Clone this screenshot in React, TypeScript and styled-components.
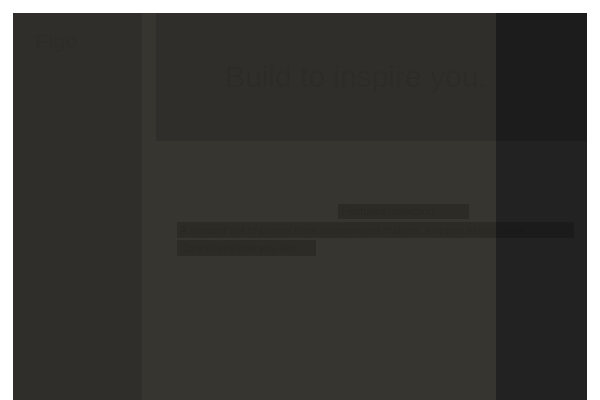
import styled, { createGlobalStyle } from 'styled-components';

const GlobalStyle = createGlobalStyle`
    html, body {
        margin: 0;
        background: #ffffff;
    }

    body {
        padding: 13px 13px 0;
        font-family: "Liberation Sans", Arial, sans-serif;
        overflow: hidden;
    }
`;

const App = () => {
    return (
        <>
            <GlobalStyle />
            <Frame>
                <Sidebar as="aside">
                    <Logo>Figo</Logo>
                </Sidebar>

                <Main as="main">
                    <Hero>
                        <HeroTitle>Build to inspire you.</HeroTitle>
                    </Hero>
                    <Body>
                        <Line $width={131} $offset={161} $height={15}>
                            Featured collection
                        </Line>
                        <Line $width={397} $height={16} $gap={3}>
                            A curated set of pieces from independent makers, shipped to your door.
                        </Line>
                        <Line $width={139} $height={16} $gap={2}>
                            Cancel anytime you like.
                        </Line>
                    </Body>
                </Main>

                <Aside>
                    <AsideTop />
                </Aside>
            </Frame>
        </>
    );
};

export default App;

const Frame = styled.div`
    display: grid;
    grid-template-columns: 129px 354px 91px;
    height: 387px;
    overflow: hidden;
`;

const Sidebar = styled.div`
    background: #2f2e2a;
    padding: 16px 22px;
`;

const Logo = styled.div`
    font-size: 21px;
    font-weight: 700;
    letter-spacing: -0.5px;
    color: rgba(0, 0, 0, 0.05);
`;

const Main = styled.div`
    display: flex;
    flex-direction: column;
    background: #37352f;
    min-width: 0;
`;

const Hero = styled.div`
    margin-left: 14px;
    height: 128px;
    background: #2f2e2a;
    display: flex;
    align-items: center;
    padding-left: 69px;
`;

const HeroTitle = styled.h1`
    margin: 0;
    font-size: 30px;
    font-weight: 400;
    white-space: nowrap;
    color: rgba(0, 0, 0, 0.06);
`;

const Body = styled.div`
    padding: 63px 0 0 35px;
    display: flex;
    flex-direction: column;
    align-items: flex-start;
`;

const Line = styled.div<{ $width: number; $height: number; $offset?: number; $gap?: number }>`
    position: relative;
    z-index: 1;
    width: ${({ $width }) => $width}px;
    height: ${({ $height }) => $height}px;
    margin-left: ${({ $offset = 0 }) => $offset}px;
    margin-top: ${({ $gap = 0 }) => $gap}px;
    background: rgba(0, 0, 0, 0.18);
    font-size: 11px;
    line-height: ${({ $height }) => $height}px;
    padding: 0 3px;
    box-sizing: border-box;
    white-space: nowrap;
    color: rgba(0, 0, 0, 0.1);
`;

const Aside = styled.div`
    display: flex;
    flex-direction: column;
    background: #222222;
`;

const AsideTop = styled.div`
    height: 128px;
    background: #1c1c1c;
`;
